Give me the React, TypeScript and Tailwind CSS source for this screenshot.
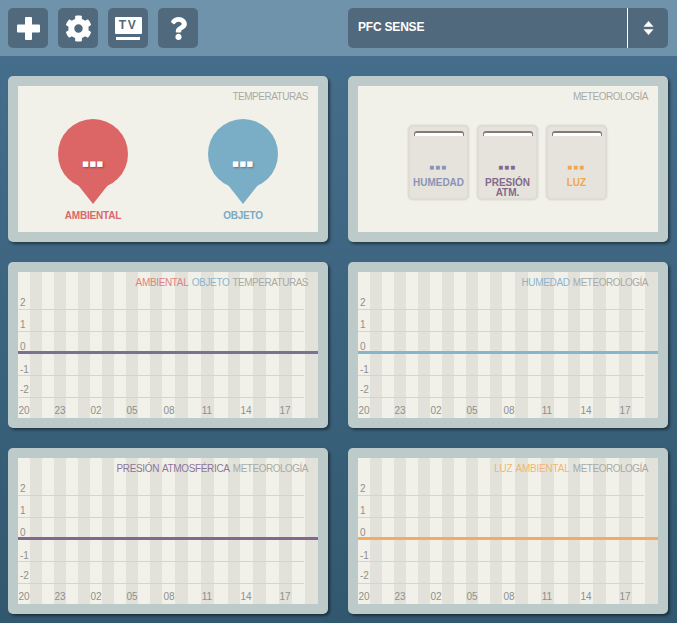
import { FaCog, FaQuestion } from "react-icons/fa";

const stripes = [
  [12, 12], [36, 12], [60, 12], [84, 12], [108, 12], [132, 12],
  [157, 13], [183, 13], [210, 12], [235, 13], [261, 13], [287, 13],
];
const gridLines = [37, 59, 103, 125];
const yLabels = [
  { text: "2", top: 24 },
  { text: "1", top: 46 },
  { text: "0", top: 68 },
  { text: "-1", top: 91 },
  { text: "-2", top: 111 },
];
const xLabels = [
  { text: "20", center: 6 },
  { text: "23", center: 42 },
  { text: "02", center: 78 },
  { text: "05", center: 114 },
  { text: "08", center: 151 },
  { text: "11", center: 189 },
  { text: "14", center: 228 },
  { text: "17", center: 267 },
];

const Card = ({ children }: { children: React.ReactNode }) => (
  <div className="h-[166px] w-[320px] rounded-[5px] bg-[#bccaca] p-[10px] shadow-[2px_2px_3px_rgba(0,0,0,0.45)]">
    <div className="relative h-[146px] bg-[#f2f1e9]">{children}</div>
  </div>
);

const Title = ({ children }: { children: React.ReactNode }) => (
  <p className="absolute top-[4px] right-[10px] z-10 text-[10px] leading-[13px] tracking-[-0.5px] text-[#a9aaa5] [word-spacing:1px]">
    {children}
  </p>
);

const Chart = ({ color, children }: { color: string; children: React.ReactNode }) => (
  <Card>
    <svg width="300" height="146" className="absolute top-0 left-0">
      {stripes.map(([x, w]) => (
        <rect key={x} x={x} y="0" width={w} height="146" fill="#e2e1da" />
      ))}
      {gridLines.map((y) => (
        <rect key={y} x="0" y={y} width="286" height="1" fill="#d3d5cf" />
      ))}
      <rect x="0" y="79" width="300" height="3" fill={color} />
    </svg>
    <Title>{children}</Title>
    {yLabels.map((l) => (
      <span
        key={l.text}
        className="absolute left-[2px] text-[10px] leading-[13px] text-[#8f908a]"
        style={{ top: l.top }}
      >
        {l.text}
      </span>
    ))}
    {xLabels.map((l) => (
      <span
        key={l.text}
        className="absolute top-[132px] w-[20px] -translate-x-1/2 text-center text-[10px] leading-[13px] text-[#8f908a]"
        style={{ left: l.center }}
      >
        {l.text}
      </span>
    ))}
  </Card>
);

const Pin = ({ color, textColor, label }: { color: string; textColor: string; label: string }) => (
  <div className="flex w-[150px] flex-col items-center pt-[33px]">
    <div className="relative h-[85px] w-[70px]">
      <svg width="70" height="85" viewBox="0 0 70 85" className="absolute top-0 left-0">
        <circle cx="35" cy="35" r="35" fill={color} />
        <path d="M20 66 L35 85 L50 66 Z" fill={color} />
      </svg>
      <p className="absolute top-[41px] w-full text-center font-['DejaVu_Sans',sans-serif] text-[7px] leading-[8px] tracking-[0.6px] text-white [text-shadow:1px_1px_2px_rgba(0,0,0,0.3)]">
        ■■■
      </p>
    </div>
    <p className="mt-[5px] text-[10px] leading-[13px] font-bold tracking-[-0.2px]" style={{ color: textColor }}>
      {label}
    </p>
  </div>
);

const Tile = ({ color, label }: { color: string; label: string }) => (
  <div className="flex h-[75px] w-[61px] flex-col items-center rounded-[5px] border-2 border-[#dfdcd5] bg-[#e6e3dd] px-[4px] pt-[4px] shadow-[0_0_2px_rgba(0,0,0,0.15)]">
    <div className="h-[5px] w-[50px] shrink-0 rounded-t-[3px] border-t-2 border-r border-l border-[#85797a] bg-white" />
    <p className="mt-[28px] font-['DejaVu_Sans',sans-serif] text-[5px] leading-[6px] tracking-[1.2px]" style={{ color }}>
      ■■■
    </p>
    <p className="mt-[8px] text-center text-[10px] leading-[10px] font-bold" style={{ color }}>
      {label}
    </p>
  </div>
);

const IconButton = ({ children }: { children: React.ReactNode }) => (
  <button className="flex h-[40px] w-[40px] items-center justify-center rounded-[5px] bg-[#51697c] text-white">
    {children}
  </button>
);

const App = () => {
  return (
    <main className="flex h-[623px] w-[677px] flex-col overflow-hidden bg-gradient-to-b from-[#47708f] to-[#32586f] font-['Liberation_Sans',Arial,sans-serif]">
      {/* top bar */}
      <header className="flex h-[56px] shrink-0 items-start justify-between bg-[#7093ac] pt-[8px] pr-[9px] pl-[8px]">
        <div className="flex gap-[10px]">
          <IconButton>
            <svg width="23" height="23" viewBox="0 0 23 23" fill="white">
              <path d="M8 1 a1 1 0 0 1 1 -1 h5 a1 1 0 0 1 1 1 v6.500 h7 a1 1 0 0 1 1 1 v6 a1 1 0 0 1 -1 1 h-7 v6.500 a1 1 0 0 1 -1 1 h-5 a1 1 0 0 1 -1 -1 v-6.500 h-7 a1 1 0 0 1 -1 -1 v-6 a1 1 0 0 1 1 -1 h7 z" />
            </svg>
          </IconButton>
          <IconButton>
            <FaCog size={27} />
          </IconButton>
          <IconButton>
            <div className="flex flex-col items-center">
              <span className="flex h-[17px] w-[27px] items-center justify-center rounded-[1px] bg-white text-[12px] leading-none font-bold tracking-[1.5px] text-[#51697c]">
                TV
              </span>
              <span className="mt-[3px] h-[3px] w-[24px] bg-white" />
            </div>
          </IconButton>
          <IconButton>
            <FaQuestion size={23} />
          </IconButton>
        </div>
        <div className="flex h-[40px] w-[320px] items-stretch rounded-[5px] bg-[#51697c] text-white">
          <p className="flex-1 pl-[10px] text-[12px] leading-[38px] font-bold tracking-[-0.2px]">PFC SENSE</p>
          <div className="flex w-[41px] items-center justify-center border-l border-white">
            <svg width="11" height="14" viewBox="0 0 11 14" fill="white">
              <path d="M5.500 0 L10.500 5.800 L0.500 5.800 Z" />
              <path d="M5.500 14 L10.500 8.200 L0.500 8.200 Z" />
            </svg>
          </div>
        </div>
      </header>

      {/* panels */}
      <section className="grid grid-cols-[320px_320px] gap-x-[20px] gap-y-[20px] pt-[20px] pl-[8px]">
        <Card>
          <Title>TEMPERATURAS</Title>
          <div className="flex">
            <Pin color="#dc6565" textColor="#d9686b" label="AMBIENTAL" />
            <Pin color="#7aaec6" textColor="#7aaac4" label="OBJETO" />
          </div>
        </Card>
        <Card>
          <Title>METEOROLOGÍA</Title>
          <div className="flex justify-center gap-[8px] pt-[39px] pr-[1px]">
            <Tile color="#8b93b5" label="HUMEDAD" />
            <Tile color="#83698a" label="PRESIÓN ATM." />
            <Tile color="#f0a850" label="LUZ" />
          </div>
        </Card>
        <Chart color="#7a7290">
          <span className="tracking-[-0.35px] text-[#de8384]">AMBIENTAL</span>{" "}
          <span className="tracking-[-0.35px] text-[#8db4cc]">OBJETO</span> TEMPERATURAS
        </Chart>
        <Chart color="#86b5cc">
          <span className="tracking-[-0.35px] text-[#8db4cc]">HUMEDAD</span> METEOROLOGÍA
        </Chart>
        <Chart color="#81688c">
          <span className="tracking-[-0.35px] text-[#8d7596]">PRESIÓN ATMOSFÉRICA</span> METEOROLOGÍA
        </Chart>
        <Chart color="#f4aa62">
          <span className="tracking-[-0.2px] text-[#f2b672]">LUZ AMBIENTAL</span> METEOROLOGÍA
        </Chart>
      </section>
    </main>
  );
};

export default App;
